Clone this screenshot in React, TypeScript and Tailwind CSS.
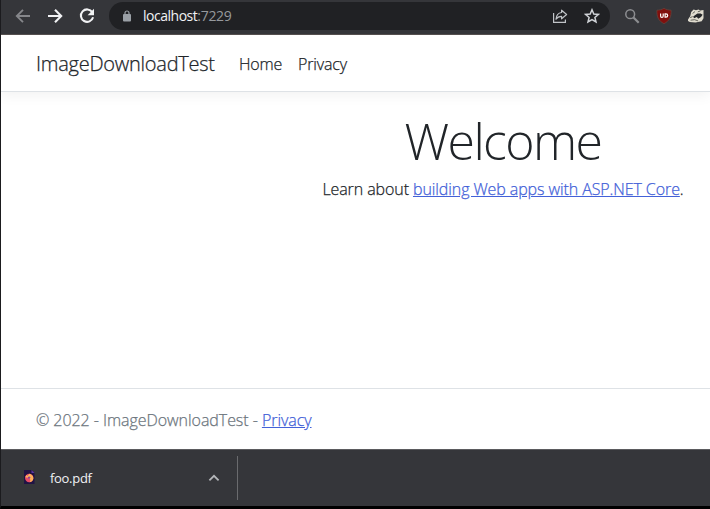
import React from "react";

function BrowserBar() {
  return (
    <div className="flex h-[35px] shrink-0 items-start border-b border-[#55504f] bg-[#35363a]">
      <div className="flex h-[32px] items-center pl-[14px]">
        <svg className="h-4 w-4" viewBox="0 0 16 16" fill="none" stroke="#85868a" strokeWidth="1.9">
          <path d="M15 8H2M8 1.8L1.8 8L8 14.2" />
        </svg>
        <svg className="ml-4 h-4 w-4" viewBox="0 0 16 16" fill="none" stroke="#f1f2f4" strokeWidth="2.1">
          <path d="M1 8H14M8 1.8L14.2 8L8 14.2" />
        </svg>
        <svg className="ml-4 h-4 w-4" viewBox="0 0 16 16">
          <path d="M13.3 4.2A6.2 6.2 0 1 0 14.1 9.3" fill="none" stroke="#f1f2f4" strokeWidth="2.1" />
          <path d="M15 0.8V7.2H8.6z" fill="#f1f2f4" />
        </svg>
      </div>
      <div className="mt-[2px] ml-[14px] flex h-[28px] w-[501px] items-center rounded-full bg-[#202124] pl-[14px] pr-[10px]">
        <svg className="h-3 w-2" viewBox="0 0 8 12">
          <rect y="4" width="8" height="7.5" rx="1" fill="#9aa0a6" />
          <path d="M2 5V3a2 2 0 0 1 4 0v2" fill="none" stroke="#9aa0a6" strokeWidth="1.2" />
        </svg>
        <div className="ml-[12px] text-[14px] leading-none tracking-[-0.48px] text-[#f1f2f4]">
          <span className="font-medium">localhost</span>
          <span className="tracking-[-0.3px] text-[#96999d]">:7229</span>
        </div>
        <svg className="ml-auto h-4 w-4" viewBox="0 0 16 16" fill="none" stroke="#c0c3c7" strokeWidth="1.2">
          <path d="M1.6 5v9.3h11.8v-2.8" />
          <path d="M9.6 2.2l5 4.3-5 4.3V8.4C7 8.4 5.2 9.3 4 11.2 4.3 7.5 6.3 4.9 9.6 4.5z" strokeLinejoin="round" />
        </svg>
        <svg className="ml-4 h-4 w-4" viewBox="0 0 16 16" fill="none" stroke="#d0d3d7" strokeWidth="1.5">
          <path d="M8 1.8l1.8 4.2 4.6.4-3.5 3 1.1 4.5L8 11.5l-4 2.4 1.1-4.5-3.5-3L6.2 6z" />
        </svg>
      </div>
      <div className="flex h-[32px] items-center pl-[14px]">
        <svg className="h-4 w-4" viewBox="0 0 16 16" fill="none" stroke="#8d8e91">
          <circle cx="6.2" cy="6.2" r="4.4" strokeWidth="1.5" />
          <path d="M9.5 9.5L14.7 14.7" strokeWidth="2.2" />
        </svg>
        <svg className="ml-4 h-4 w-4" viewBox="0 0 16 16">
          <path d="M8 .3c2 1.3 4.4 1.8 7.1 1.9C15.3 8.8 13.8 12.6 8 15.7 2.2 12.6.7 8.8.9 2.2 3.6 2.1 6 1.6 8 .3z" fill="#800f0d" stroke="#65483f" strokeWidth=".7" />
          <path d="M4.6 5.4v2.5q0 1.5 1.3 1.5t1.3-1.5V5.4" fill="none" stroke="#fff" strokeWidth="1.2" />
          <path d="M9.1 5.9h.8q1.8 0 1.8 1.6t-1.8 1.6h-.8z" fill="none" stroke="#fff" strokeWidth="1.2" />
        </svg>
        <svg className="ml-4 h-4 w-4" viewBox="0 0 16 16">
          <path d="M0 11.5L2.3 8 3.2 4 5.6 1.4 8 2.2l2.6-.8 1.6 1 3.3-.3v8.2l-1.8 3-6.2 1.2-5.7-.6-1.8-1z" fill="#e0dccf" />
          <path d="M5.2 8.4l4.2-2.8 3.2-.2 2 1.3-1.6 2.4-2.8 1.6-1.3-1.6-2.9 1.1z" fill="#25272a" />
          <path d="M4.6 5.4l2.4-1.8M9.8 3.8l2.6-.8M2.2 9.6l2.4-1M2.6 12.2l4-.5 3.5 1.2" fill="none" stroke="#484942" strokeWidth=".8" />
        </svg>
      </div>
    </div>
  );
}

function DownloadBar() {
  return (
    <div className="flex h-[57px] shrink-0 items-center border-t border-[#5b5b5e] bg-[#35363a]">
      <div className="flex h-[44px] w-[237px] shrink-0 items-center border-r border-[#6a6b6e] pr-[17px] pl-[21px]">
        <svg className="mb-[2px] h-4 w-[14px]" viewBox="0 0 14 16">
          <path d="M2 1h7.5l3 3v11H2z" fill="#211344" />
          <path d="M9.5 1v3h3z" fill="#5a35a5" />
          <circle cx="7.2" cy="9" r="4.2" fill="#e84b67" />
          <path d="M3.3 8.2l1-2.3 1.3 1L7.3 4.8c2 .4 4.2 2 4.1 4.4-.1 2-1.7 3.7-3.7 4 1.4-1.8.5-3.6-.8-4.2z" fill="#ffb05a" />
          <circle cx="7.1" cy="8.6" r="1.2" fill="#8c4299" />
        </svg>
        <div className="ml-[14px] text-[13px] leading-none font-medium tracking-[-0.3px] text-[#f1f2f4]">foo.pdf</div>
        <svg className="ml-auto h-3 w-3" viewBox="0 0 12 12" fill="none" stroke="#b5b7ba" strokeWidth="1.8">
          <path d="M1.4 8.4L6 3.8l4.6 4.6" />
        </svg>
      </div>
    </div>
  );
}

export default function App() {
  return (
    <div className="flex h-[509px] w-[710px] flex-col overflow-hidden border-b-[3px] border-l border-b-black border-l-[#1b1b1e] bg-white font-['Open_Sans','Noto_Sans',sans-serif] text-[16px] text-[#212529]">
      <BrowserBar />
      <header className="flex h-[57px] shrink-0 items-center border-b border-[#dee2e6] pl-[35px] font-light shadow-[0_4px_12px_rgba(0,0,0,0.05)] [-webkit-text-stroke:0.25px]">
        <div className="mt-[2px] w-[203px] text-[20px] tracking-[-0.25px]">ImageDownloadTest</div>
        <nav className="mt-px flex tracking-[-0.15px]">
          <a className="w-[59px]">Home</a>
          <a>Privacy</a>
        </nav>
      </header>
      <main className="flex grow flex-col items-center pt-[19px] pl-[295px]">
        <h1 className="text-[50px] leading-[60px] font-light tracking-[-1.6px]">Welcome</h1>
        <p className="mt-[6px] leading-6 font-light tracking-[-0.09px] whitespace-nowrap [-webkit-text-stroke:0.25px]">
          Learn about <a className="text-[#4361d8] underline">building Web apps with ASP.NET Core</a>.
        </p>
      </main>
      <footer className="flex h-[61px] shrink-0 items-center border-t border-[#dee2e6] pt-px pl-[35px] font-light tracking-[-0.05px] text-[#6c757d] [-webkit-text-stroke:0.25px]">
        <div>
          © 2022 - ImageDownloadTest - <a className="text-[#4361d8] underline">Privacy</a>
        </div>
      </footer>
      <DownloadBar />
    </div>
  );
}
